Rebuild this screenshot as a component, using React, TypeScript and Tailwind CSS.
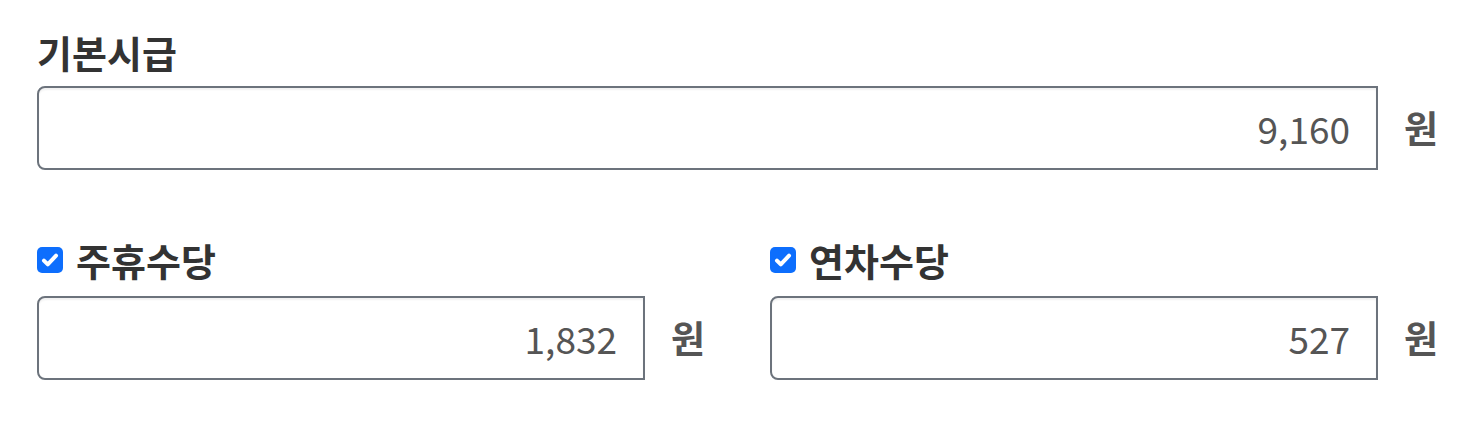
import React from 'react'

const FONT = '"Noto Sans CJK KR", "Noto Sans", sans-serif'

const CheckIcon = () => (
  <span className="w-[26px] h-[26px] rounded-[5px] bg-[#0d6efd] flex items-center justify-center shrink-0">
    <svg width="22" height="22" viewBox="0 0 20 20" fill="none">
      <path
        d="M4.5 10.5l3.5 3.5 7.5-8"
        stroke="white"
        strokeWidth={3.6}
        strokeLinecap="round"
        strokeLinejoin="round"
      />
    </svg>
  </span>
)

const AmountInput = ({ value }: { value: string }) => (
  <div className="flex items-stretch">
    <div className="flex-1 h-[84px] border-2 border-[#6c737c] rounded-l-[8px] bg-white flex items-center justify-end pr-[26px] shadow-[inset_0_2px_2px_rgba(0,0,0,0.06)]">
      <span className="text-[37px] text-[#555555] leading-none">{value}</span>
    </div>
    <span className="w-[83px] pl-[3px] flex items-center justify-center text-[37px] font-bold text-[#555555]">
      원
    </span>
  </div>
)

export default function App() {
  return (
    <div className="bg-white w-[1461px] h-[425px] pl-[37px] pt-[26px]" style={{ fontFamily: FONT }}>
      {/* 기본시급 */}
      <div>
        <label className="block text-[38px] leading-[51px] font-bold text-[#333333] mb-[9px]">
          기본시급
        </label>
        <AmountInput value="9,160" />
      </div>

      {/* 수당 */}
      <div className="grid grid-cols-2 gap-x-[42px] mt-[64px]">
        <div>
          <div className="flex items-center gap-[13px] mb-[11px]">
            <CheckIcon />
            <span className="text-[38px] leading-[51px] font-bold text-[#333333]">주휴수당</span>
          </div>
          <AmountInput value="1,832" />
        </div>
        <div>
          <div className="flex items-center gap-[13px] mb-[11px]">
            <CheckIcon />
            <span className="text-[38px] leading-[51px] font-bold text-[#333333]">연차수당</span>
          </div>
          <AmountInput value="527" />
        </div>
      </div>
    </div>
  )
}
